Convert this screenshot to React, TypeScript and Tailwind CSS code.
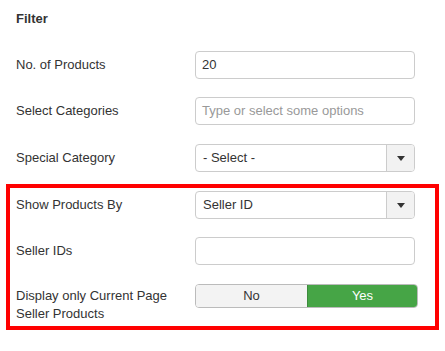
import React from "react";

function Caret() {
  return (
    <svg width="8" height="5" viewBox="0 0 8 5">
      <path d="M0 0 H8 L4 5 Z" fill="#333" />
    </svg>
  );
}

function SelectBox({ value }: { value: string }) {
  return (
    <div className="flex h-[28px] w-[220px] overflow-hidden rounded-[4px] border border-[#cccccc] bg-white">
      <div className="flex flex-1 items-center pl-[7px] text-[13px] text-[#333]">{value}</div>
      <div className="flex w-[28px] items-center justify-center border-l border-[#cccccc] bg-[#f2f2f2]">
        <Caret />
      </div>
    </div>
  );
}

function Row({
  label,
  children,
  className = "",
}: {
  label: React.ReactNode;
  children: React.ReactNode;
  className?: string;
}) {
  return (
    <div className={"flex items-center " + className}>
      <div className="w-[195px] shrink-0 pl-[16px] text-[13px] leading-[18px] text-[#333]">{label}</div>
      {children}
    </div>
  );
}

export default function App() {
  return (
    <div
      className="h-[351px] w-[445px] bg-white text-[#333]"
      style={{ fontFamily: '"Liberation Sans", Arial, sans-serif' }}
    >
      <div className="pt-[10px] pl-[16px] text-[13px] font-bold leading-[18px]">Filter</div>

      <Row label="No. of Products" className="mt-[23px]">
        <div className="flex h-[28px] w-[220px] items-center rounded-[4px] border border-[#cccccc] bg-white pl-[6px] text-[13px]">
          20
        </div>
      </Row>

      <Row label="Select Categories" className="mt-[18px]">
        <div className="flex h-[28px] w-[220px] items-center rounded-[4px] border border-[#cccccc] bg-white pl-[6px] text-[13px] text-[#999]">
          Type or select some options
        </div>
      </Row>

      <Row label="Special Category" className="mt-[19px]">
        <SelectBox value="- Select -" />
      </Row>

      <div className="mx-[6px] mt-[12px] w-[433px] border-[4px] border-[#ff0000] pb-[3px] pt-[3px]">
        <Row label="Show Products By" className="-ml-[10px]">
          <SelectBox value="Seller ID" />
        </Row>
        <Row label="Seller IDs" className="-ml-[10px] mt-[18px]">
          <div className="h-[28px] w-[220px] rounded-[4px] border border-[#cccccc] bg-white" />
        </Row>
        <div className="-ml-[10px] mt-[19px] flex items-start">
          <div className="w-[195px] shrink-0 pl-[16px] pt-[3px] text-[13px] leading-[18px] text-[#333]">
            Display only Current Page
            <br />
            Seller Products
          </div>
          <div className="flex h-[24px] w-[223px] overflow-hidden rounded-[4px] border border-[#bbbbbb] text-[13px]">
            <div className="flex w-[111px] items-center justify-center bg-[#f3f3f3] text-[#333]">No</div>
            <div className="flex flex-1 items-center justify-center border-l border-[#3d8b3d] bg-[#46a546] text-white">
              Yes
            </div>
          </div>
        </div>
      </div>
    </div>
  );
}
